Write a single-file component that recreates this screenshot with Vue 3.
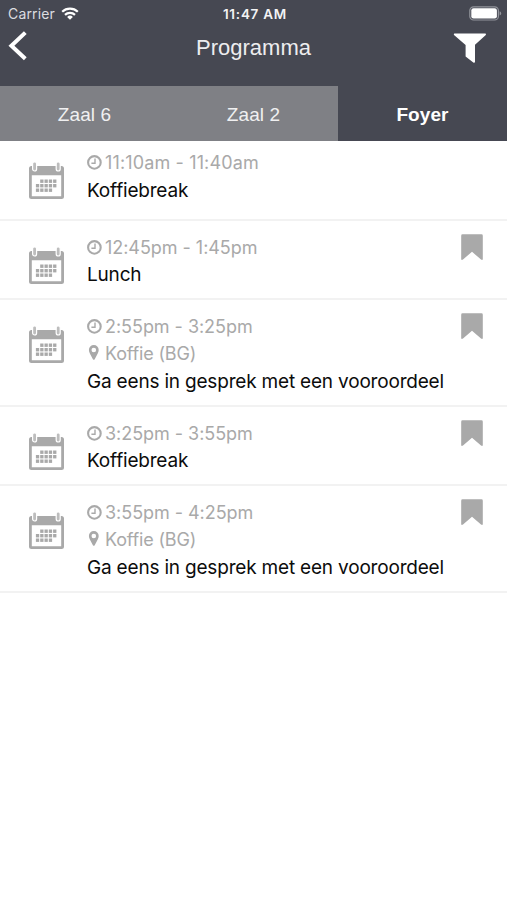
<script setup>
const tabs = [
  { name: 'Zaal 6', active: false },
  { name: 'Zaal 2', active: false },
  { name: 'Foyer', active: true },
]

const sessions = [
  { time: '11:10am - 11:40am', title: 'Koffiebreak', bookmark: false },
  { time: '12:45pm - 1:45pm', title: 'Lunch', bookmark: true },
  { time: '2:55pm - 3:25pm', place: 'Koffie (BG)', title: 'Ga eens in gesprek met een vooroordeel', bookmark: true },
  { time: '3:25pm - 3:55pm', title: 'Koffiebreak', bookmark: true },
  { time: '3:55pm - 4:25pm', place: 'Koffie (BG)', title: 'Ga eens in gesprek met een vooroordeel', bookmark: true },
]

// Day squares on the calendar page, as [x, y]
const days = [
  [11.2, 17.5], [15.5, 17.5], [19.8, 17.5], [24.1, 17.5],
  [6.9, 22], [11.2, 22], [15.5, 22], [19.8, 22], [24.1, 22],
  [6.9, 26.5], [11.2, 26.5], [15.5, 26.5], [19.8, 26.5],
]
</script>

<template>
  <main class="screen">
    <header class="header">
      <div class="status">
        <div class="carrier">
          <span class="carrier-name">Carrier</span>
          <svg class="wifi" width="18" height="13" viewBox="0 0 18 13">
            <g fill="none" stroke="#fff" stroke-width="2.2">
              <path d="M1.2 4.8a11.2 11.2 0 0 1 15.6 0" />
              <path d="M4 7.9a7.2 7.2 0 0 1 10 0" />
            </g>
            <path d="M6.1 10a4.2 4.2 0 0 1 5.8 0L9 12.8z" fill="#fff" />
          </svg>
        </div>
        <span class="clock">11:47 AM</span>
        <svg class="battery" width="33" height="15" viewBox="0 0 33 15">
          <rect x="0.8" y="0.8" width="28.6" height="13.2" rx="3.8" fill="none" stroke="#92949b" stroke-width="1.2" />
          <rect x="2.3" y="2.3" width="25.6" height="10.2" rx="2.2" fill="#fff" />
          <path d="M30.6 5.2q1.6.6 1.6 2.2t-1.6 2.2z" fill="#92949b" />
        </svg>
      </div>
      <nav class="bar">
        <svg class="back" width="22" height="32" viewBox="0 0 22 32">
          <path d="M18.3 2.6L4.4 15.7L18.3 28.8" fill="none" stroke="#fff" stroke-width="4" />
        </svg>
        <h1 class="title">Programma</h1>
        <svg class="filter" width="34" height="31" viewBox="0 0 34 31">
          <path d="M1.4.5H32.4Q33.4.7 32.8 2L22 11.7V29Q21.6 30.3 20.3 29.5L12.6 23.6V12L1 2Q.4.9 1.4.5z" fill="#fff" />
        </svg>
      </nav>
    </header>

    <div class="tabs">
      <div v-for="tab in tabs" :key="tab.name" class="tab" :class="{ active: tab.active }"><span>{{ tab.name }}</span></div>
    </div>

    <section class="list">
      <article v-for="(s, i) in sessions" :key="i" class="row" :class="{ first: i === 0 }">
        <svg class="calendar" width="36" height="38" viewBox="0 0 36 38">
          <path fill-rule="evenodd" d="M2.5 4H32.5Q35 4 35 6.5V34.5Q35 37 32.5 37H2.5Q0 37 0 34.5V6.5Q0 4 2.5 4zM2.8 13.3V34.2H32.2V13.3z" fill="#a9a9a9" />
          <g fill="#bdbdbd" stroke="#fff" stroke-width="1.2">
            <rect x="3.6" y="-.2" width="4" height="9.2" rx="2" />
            <rect x="27.2" y="-.2" width="4" height="9.2" rx="2" />
          </g>
          <rect v-for="([x, y], d) in days" :key="d" :x="x" :y="y" width="3.3" height="3.4" fill="#a9a9a9" />
        </svg>
        <div class="details">
          <div class="meta">
            <svg class="meta-icon" width="18" height="16" viewBox="0 0 18 16">
              <circle cx="7.4" cy="7.4" r="6.3" fill="none" stroke="#a9a9a9" stroke-width="2.1" />
              <path d="M8 3.4V8.2H4.4" fill="none" stroke="#a9a9a9" stroke-width="1.4" />
            </svg>
            <span class="time">{{ s.time }}</span>
          </div>
          <div v-if="s.place" class="meta place">
            <svg class="meta-icon" width="18" height="16" viewBox="0 0 18 16">
              <path fill-rule="evenodd" d="M6.8 0a4.9 4.9 0 0 1 4.9 5Q11.7 6.5 10.6 8.7L7.7 14.3Q6.8 15.4 5.9 14.3L3 8.7Q1.9 6.5 1.9 5A4.9 4.9 0 0 1 6.8 0zM6.8 2.7a2.3 2.3 0 1 0 0 4.6a2.3 2.3 0 1 0 0-4.6z" fill="#a9a9a9" />
            </svg>
            <span class="where">{{ s.place }}</span>
          </div>
          <div class="name">{{ s.title }}</div>
        </div>
        <svg v-if="s.bookmark" class="bookmark" width="22" height="27" viewBox="0 0 22 27">
          <path d="M1.5.3H20.5Q21.8.3 21.8 1.7V25.2Q21.5 26.6 20 25.6L11 17.7L2 25.6Q.5 26.6.2 25.2V1.7Q.2.3 1.5.3z" fill="#a9a9a9" />
        </svg>
      </article>
    </section>
  </main>
</template>

<style>
body {
  background: #fff;
}
</style>

<style scoped>
.screen {
  width: 507px;
  height: 900px;
  overflow: hidden;
  background: #fff;
  font-family: Inter, "Liberation Sans", sans-serif;
}
.header {
  height: 86px;
  background: #464852;
  color: #fff;
}
.status {
  height: 27px;
  display: grid;
  grid-template-columns: 1fr auto 1fr;
  align-items: center;
  padding: 0 5px 0 8px;
  box-sizing: border-box;
}
.carrier {
  display: flex;
  align-items: center;
  gap: 6px;
}
.carrier-name {
  font-size: 14px;
  letter-spacing: 0.15px;
  color: #dcdde0;
}
.clock {
  font-size: 13.5px;
  font-weight: 600;
  letter-spacing: 0.75px;
  color: #f3f3f4;
}
.battery {
  justify-self: end;
}
.bar {
  height: 42px;
  display: grid;
  grid-template-columns: 1fr auto 1fr;
  align-items: center;
  padding: 0 7px;
}
.back {
  margin-top: -4px;
}
.title {
  margin: 0;
  font: 400 22px "Liberation Sans", sans-serif;
  color: #ededef;
}
.filter {
  justify-self: end;
  margin-right: 13px;
}
.tabs {
  height: 55px;
  display: grid;
  grid-template-columns: repeat(3, 1fr);
  background: #7f8085;
}
.tab {
  display: flex;
  align-items: center;
  justify-content: center;
  padding-top: 2px;
  font: 400 19px "Liberation Sans", sans-serif;
  letter-spacing: 0.1px;
  color: #f0f0f1;
}
.tab.active {
  background: #464852;
  color: #fff;
  font-weight: 700;
}
.row {
  display: grid;
  grid-template-columns: 36px minmax(0, 1fr) 22px;
  column-gap: 22px;
  align-items: start;
  padding: 13px 24px 10px 29px;
  border-bottom: 2px solid #f2f2f2;
}
.row.first {
  padding-top: 8px;
  padding-bottom: 15px;
}
.calendar {
  margin-top: 13px;
}
.meta {
  height: 27px;
  display: flex;
  align-items: center;
  font-size: 18px;
  letter-spacing: -0.04px;
  color: #a9a9a9;
  white-space: nowrap;
}
.first .meta {
  height: 28px;
  padding-bottom: 1px;
  box-sizing: border-box;
  letter-spacing: 0.14px;
}
.place {
  height: 28px;
  padding-bottom: 2px;
  box-sizing: border-box;
  letter-spacing: -0.18px;
}
.name {
  height: 27px;
  line-height: 27px;
  font-size: 19px;
  letter-spacing: -0.19px;
  color: #0c0c0c;
  white-space: nowrap;
}
</style>
